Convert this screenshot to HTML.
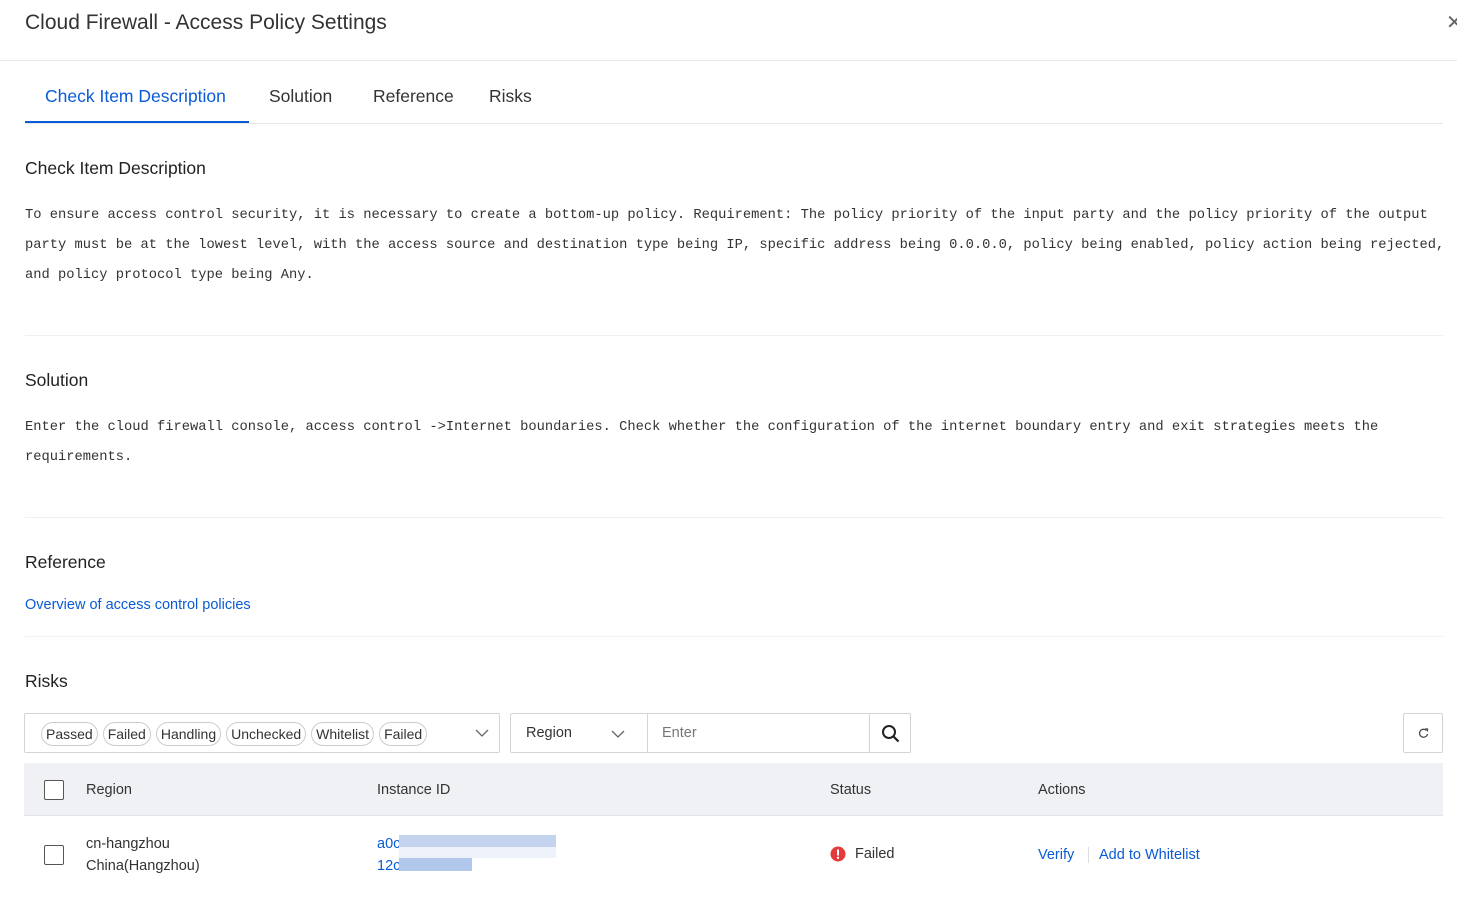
<!DOCTYPE html>
<html><head><meta charset="utf-8"><style>
*{box-sizing:border-box;margin:0;padding:0}
body{width:1457px;height:899px;overflow:hidden;background:#fff;font-family:"Liberation Sans",sans-serif;color:#333;position:relative}
.abs{position:absolute}
.title{left:25px;top:11px;font-size:21px;color:#333}
.close{left:1446px;top:10px;font-size:20px;color:#666}
.hline{position:absolute;height:1px;background:#e8e8e8}
.tab{position:absolute;top:86px;font-size:17.5px;color:#333}
h3{position:absolute;left:25px;font-size:17.5px;font-weight:normal;color:#222}
.mono{position:absolute;left:25px;font-family:"Liberation Mono",monospace;font-size:13.75px;line-height:30px;color:#333;white-space:nowrap}
.box{position:absolute;border:1px solid #d4d4d4;border-radius:2px;background:#fff}
.tag{display:inline-block;border:1px solid #ccc;border-radius:12px;padding:0 4px;font-size:14px;height:24px;line-height:23px;margin-right:5px;color:#333}
.cb{position:absolute;width:20px;height:20px;border:1.5px solid #555;border-radius:2px;background:#fff}
.t{position:absolute;font-size:14.5px;color:#333}
.t.link,.link{color:#0a5bd6}
</style></head><body>
<div class="abs title">Cloud Firewall - Access Policy Settings</div>
<div class="abs close">✕</div>
<div class="hline" style="left:0;top:60px;width:1457px"></div>
<div class="tab" style="left:45px;color:#0a5bd6">Check Item Description</div>
<div class="tab" style="left:269px">Solution</div>
<div class="tab" style="left:373px">Reference</div>
<div class="tab" style="left:489px">Risks</div>
<div class="hline" style="left:25px;top:123px;width:1418px"></div>
<div class="abs" style="left:25px;top:121px;width:224px;height:2px;background:#0a5bd6"></div>

<h3 style="top:158px">Check Item Description</h3>
<div class="mono" style="top:201px">To ensure access control security, it is necessary to create a bottom-up policy. Requirement: The policy priority of the input party and the policy priority of the output<br>party must be at the lowest level, with the access source and destination type being IP, specific address being 0.0.0.0, policy being enabled, policy action being rejected,<br>and policy protocol type being Any.</div>
<div class="hline" style="left:25px;top:335px;width:1418px;background:#f0f0f0"></div>

<h3 style="top:370px">Solution</h3>
<div class="mono" style="top:413px">Enter the cloud firewall console, access control -&gt;Internet boundaries. Check whether the configuration of the internet boundary entry and exit strategies meets the<br>requirements.</div>
<div class="hline" style="left:25px;top:517px;width:1418px;background:#f0f0f0"></div>

<h3 style="top:552px">Reference</h3>
<div class="abs link" style="left:25px;top:597px;font-size:14.5px">Overview of access control policies</div>
<div class="hline" style="left:25px;top:636px;width:1418px;background:#f0f0f0"></div>

<h3 style="top:671px">Risks</h3>
<div class="box" style="left:24px;top:713px;width:476px;height:40px;padding:8px 0 0 16px;white-space:nowrap"><span class="tag">Passed</span><span class="tag">Failed</span><span class="tag">Handling</span><span class="tag">Unchecked</span><span class="tag">Whitelist</span><span class="tag">Failed</span>
<svg class="abs" style="left:450px;top:14px" width="14" height="10"><path d="M1 2l6 6 6-6" fill="none" stroke="#666" stroke-width="1.3"/></svg></div>
<div class="box" style="left:510px;top:713px;width:401px;height:40px">
<div class="t" style="left:15px;top:11px">Region</div>
<svg class="abs" style="left:100px;top:15px" width="14" height="10"><path d="M1 2l6 6 6-6" fill="none" stroke="#666" stroke-width="1.3"/></svg>
<div class="abs" style="left:136px;top:0;width:1px;height:38px;background:#d4d4d4"></div>
<div class="t" style="left:151px;top:11px;color:#777">Enter</div>
<div class="abs" style="left:358px;top:0;width:1px;height:38px;background:#d4d4d4"></div>
<svg class="abs" style="left:370px;top:10px" width="20" height="20"><circle cx="8" cy="8" r="6" fill="none" stroke="#222" stroke-width="2"/><path d="M12.5 12.5l5 5" stroke="#222" stroke-width="2.2"/></svg>
</div>
<div class="box" style="left:1403px;top:713px;width:40px;height:40px">
<svg class="abs" style="left:13px;top:13px" width="13" height="13"><path d="M9.5 3.5A4 4 0 1 0 10.5 7" fill="none" stroke="#444" stroke-width="1.2"/><path d="M8 2h2.5v2.5" fill="none" stroke="#444" stroke-width="1.2"/></svg></div>

<div class="abs" style="left:24px;top:763px;width:1419px;height:53px;background:#eff1f5;border-bottom:1px solid #e2e4e8"></div>
<div class="cb" style="left:44px;top:780px"></div>
<div class="t" style="left:86px;top:782px">Region</div>
<div class="t" style="left:377px;top:782px">Instance ID</div>
<div class="t" style="left:830px;top:782px">Status</div>
<div class="t" style="left:1038px;top:782px">Actions</div>

<div class="cb" style="left:44px;top:845px"></div>
<div class="t" style="left:86px;top:836px">cn-hangzhou</div>
<div class="t" style="left:86px;top:858px">China(Hangzhou)</div>
<div class="t link" style="left:377px;top:836px">a0c</div>
<div class="t link" style="left:377px;top:858px">12c</div>
<div class="abs" style="left:399px;top:835px;width:157px;height:12px;background:#c5d4ee"></div>
<div class="abs" style="left:399px;top:847px;width:157px;height:11px;background:#eef2fa"></div>
<div class="abs" style="left:399px;top:858px;width:73px;height:13px;background:#b2c7ec"></div>
<svg class="abs" style="left:830px;top:846px" width="16" height="16"><circle cx="8" cy="8" r="7.5" fill="#e23b3b"/><rect x="7" y="3.5" width="2" height="6" fill="#fff"/><rect x="7" y="10.8" width="2" height="2" fill="#fff"/></svg>
<div class="t" style="left:855px;top:846px">Failed</div>
<div class="t link" style="left:1038px;top:847px">Verify</div>
<div class="abs" style="left:1088px;top:847px;width:1px;height:16px;background:#ddd"></div>
<div class="t link" style="left:1099px;top:847px">Add to Whitelist</div>
</body></html>
